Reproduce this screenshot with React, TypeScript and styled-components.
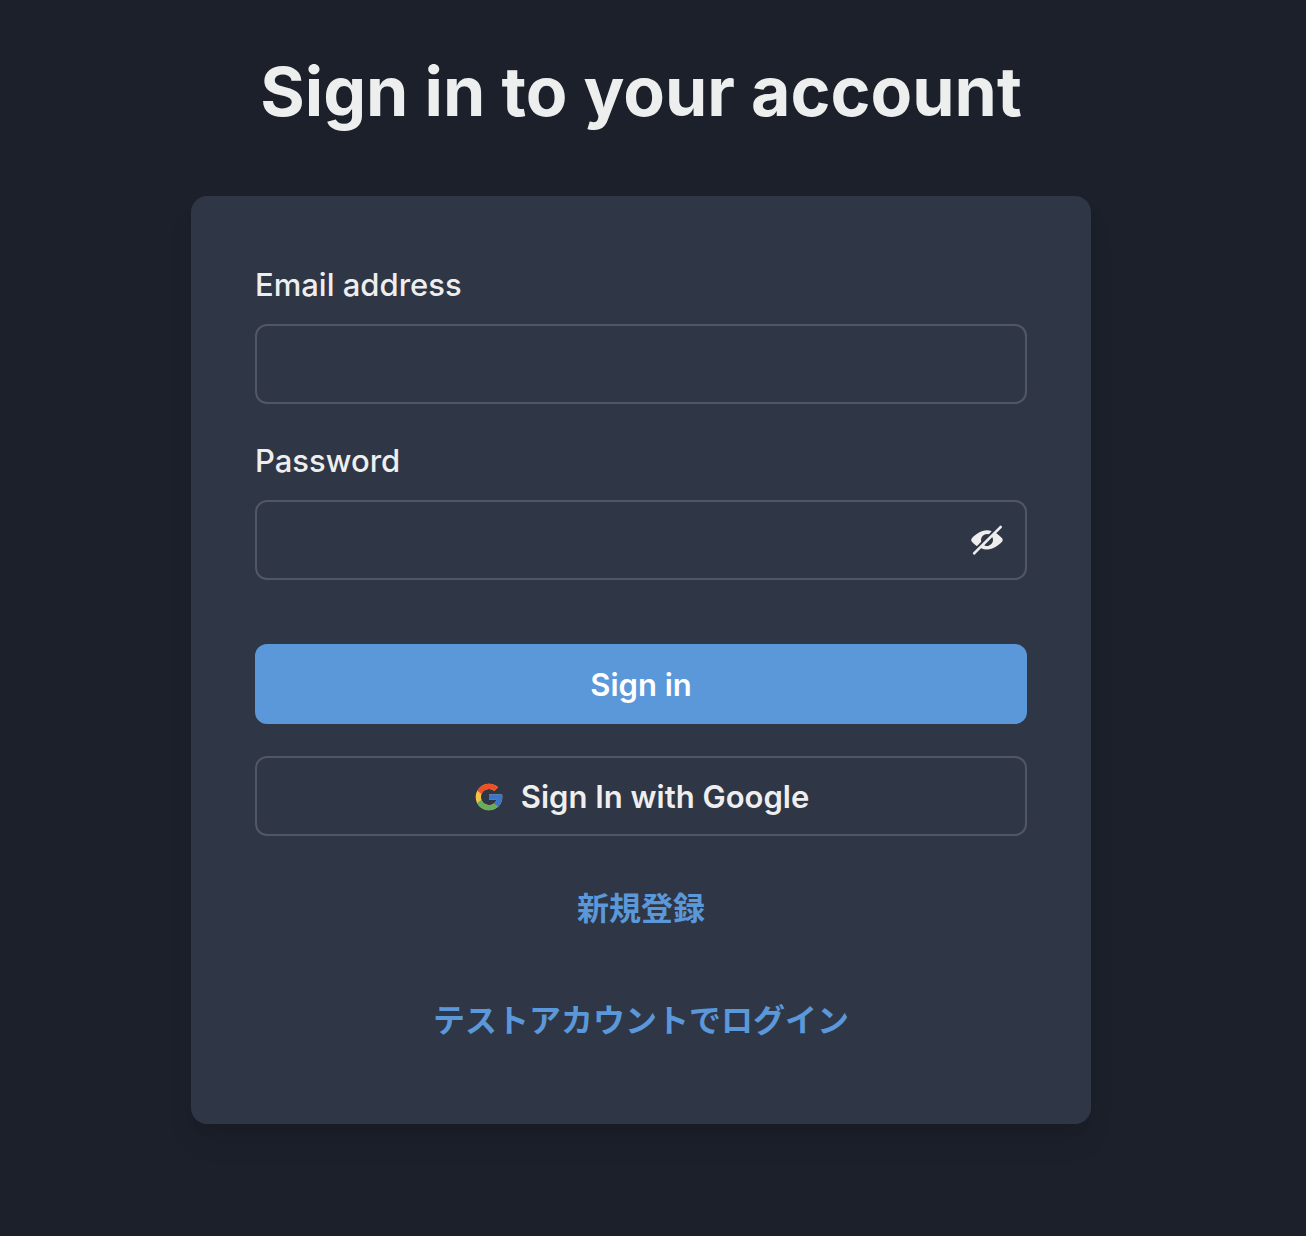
import React, { useState } from "react";
import styled, { createGlobalStyle } from "styled-components";

const GlobalStyle = createGlobalStyle`
  *, *::before, *::after { box-sizing: border-box; }
  body {
    margin: 0;
    background: #1c202a;
    color: #eeeeef;
    font-family: Inter, "Noto Sans CJK JP", sans-serif;
    font-size: 31px;
    line-height: 50px;
  }
`;

const Page = styled.main`
  min-height: 100vh;
  display: flex;
  flex-direction: column;
  align-items: center;
  gap: 62px;
  padding: 48px 24px 64px 0;
`;

const Title = styled.h1`
  margin: 0;
  font-size: 68px;
  line-height: 86px;
  font-weight: 700;
  text-align: center;
  color: #edefee;
`;

const Card = styled.form`
  width: 100%;
  max-width: 900px;
  display: flex;
  flex-direction: column;
  gap: 64px;
  padding: 64px;
  border-radius: 16px;
  background: #2f3645;
  box-shadow: 0 20px 30px -6px rgba(0, 0, 0, 0.1), 0 8px 12px -4px rgba(0, 0, 0, 0.05);
`;

const Stack = styled.div`
  display: flex;
  flex-direction: column;
  gap: 32px;
`;

const Field = styled.div`
  display: flex;
  flex-direction: column;
  gap: 14px;
`;

const Label = styled.label`
  align-self: flex-start;
  font-weight: 500;
`;

const InputBox = styled.div`
  height: 80px;
  display: flex;
  align-items: stretch;
  border: 2px solid #525766;
  border-radius: 12px;

  &:focus-within { border-color: #5a98da; }
`;

const TextInput = styled.input`
  flex: 1;
  min-width: 0;
  padding: 0 30px;
  border: 0;
  outline: 0;
  background: transparent;
  color: inherit;
  font: inherit;
`;

const RevealButton = styled.button`
  width: 76px;
  display: flex;
  align-items: center;
  justify-content: center;
  padding: 0;
  border: 0;
  background: transparent;
  color: #eeeeef;
  cursor: pointer;
`;

const Button = styled.button<{ $primary?: boolean }>`
  width: 100%;
  height: 80px;
  display: flex;
  align-items: center;
  justify-content: center;
  gap: 16px;
  padding: 2px 32px 0;
  border: 2px solid ${(p) => (p.$primary ? "#5a98da" : "#525766")};
  border-radius: 12px;
  background: ${(p) => (p.$primary ? "#5a98da" : "transparent")};
  color: ${(p) => (p.$primary ? "#ffffff" : "#eeeeef")};
  font: inherit;
  font-weight: 600;
  cursor: pointer;
`;

const TextLink = styled.a`
  height: 80px;
  display: flex;
  align-items: center;
  justify-content: center;
  padding-top: 2px;
  color: #5a98da;
  font-size: 32px;
  font-weight: 600;
  text-decoration: none;
`;

const HiddenIcon = () => (
  <svg width="32" height="32" viewBox="0 0 24 24" fill="currentColor" aria-hidden="true">
    <path d="M23.2,10.549a20.954,20.954,0,0,0-4.3-3.6l4-3.995a1,1,0,1,0-1.414-1.414l-.018.018a.737.737,0,0,1-.173.291l-19.5,19.4c-.008.007-.018.009-.026.017a1,1,0,1,0,1.631,1.088l4.146-4.146a11.26,11.26,0,0,0,4.31.939h.3c4.256,0,8.489-2.984,11.051-5.8A2.171,2.171,0,0,0,23.2,10.549ZM16.313,13.27a4.581,4.581,0,0,1-3,3.028,4.3,4.3,0,0,1-3.1-.19.253.253,0,0,1-.068-.407l5.56-5.559a.252.252,0,0,1,.407.067A4.3,4.3,0,0,1,16.313,13.27Z" />
    <path d="M7.615,13.4a.244.244,0,0,0,.061-.24A4.315,4.315,0,0,1,7.5,12,4.5,4.5,0,0,1,12,7.5a4.276,4.276,0,0,1,1.16.173.244.244,0,0,0,.24-.062l1.941-1.942a.254.254,0,0,0-.1-.421A10.413,10.413,0,0,0,12,4.75C7.7,4.692,3.4,7.7.813,10.549a2.15,2.15,0,0,0-.007,2.9,21.209,21.209,0,0,0,3.438,3.03.256.256,0,0,0,.326-.029Z" />
  </svg>
);

const GoogleIcon = () => (
  <svg width="32" height="32" viewBox="0 0 48 48" aria-hidden="true">
    <path fill="#f6c243" d="M43.611,20.083H42V20H24v8h11.303c-1.649,4.657-6.08,8-11.303,8c-6.627,0-12-5.373-12-12c0-6.627,5.373-12,12-12c3.059,0,5.842,1.154,7.961,3.039l5.657-5.657C34.046,6.053,29.268,4,24,4C12.955,4,4,12.955,4,24c0,11.045,8.955,20,20,20c11.045,0,20-8.955,20-20C44,22.659,43.862,21.35,43.611,20.083z" />
    <path fill="#ed4f26" d="M6.306,14.691l6.571,4.819C14.655,15.108,18.961,12,24,12c3.059,0,5.842,1.154,7.961,3.039l5.657-5.657C34.046,6.053,29.268,4,24,4C16.318,4,9.656,8.337,6.306,14.691z" />
    <path fill="#67ad5b" d="M24,44c5.166,0,9.86-1.977,13.409-5.192l-6.19-5.238C29.211,35.091,26.715,36,24,36c-5.202,0-9.619-3.317-11.283-7.946l-6.522,5.025C9.505,39.556,16.227,44,24,44z" />
    <path fill="#3875cb" d="M43.611,20.083H42V20H24v8h11.303c-0.792,2.237-2.231,4.166-4.087,5.571c0.001-0.001,0.002-0.001,0.003-0.002l6.19,5.238C36.971,39.205,44,34,44,24C44,22.659,43.862,21.35,43.611,20.083z" />
  </svg>
);

export default function App() {
  const [visible, setVisible] = useState(false);
  return (
    <>
      <GlobalStyle />
      <Page>
        <Title>Sign in to your account</Title>
        <Card onSubmit={(e) => e.preventDefault()}>
          <Stack>
            <Field>
              <Label htmlFor="email">Email address</Label>
              <InputBox>
                <TextInput id="email" name="email" type="email" autoComplete="email" />
              </InputBox>
            </Field>
            <Field>
              <Label htmlFor="password">Password</Label>
              <InputBox>
                <TextInput
                  id="password"
                  name="password"
                  type={visible ? "text" : "password"}
                  autoComplete="current-password"
                />
                <RevealButton
                  type="button"
                  aria-label="Show password"
                  aria-pressed={visible}
                  onClick={() => setVisible(!visible)}
                >
                  <HiddenIcon />
                </RevealButton>
              </InputBox>
            </Field>
          </Stack>
          <Stack>
            <Button type="submit" $primary>Sign in</Button>
            <Button type="button">
              <GoogleIcon />
              Sign In with Google
            </Button>
            <TextLink href="#signup" lang="ja">新規登録</TextLink>
            <TextLink href="#test-login" lang="ja">テストアカウントでログイン</TextLink>
          </Stack>
        </Card>
      </Page>
    </>
  );
}
